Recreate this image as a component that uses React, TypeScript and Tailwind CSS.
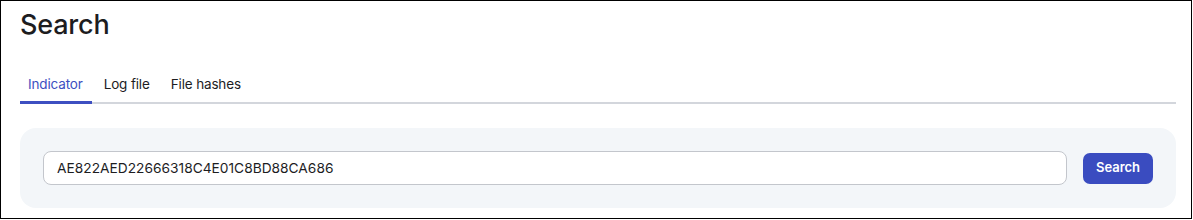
export default function App() {
  const tabs = ["Indicator", "Log file", "File hashes"];
  return (
    <div
      className="h-[219px] w-[1192px] border border-black bg-white pl-[19px] pr-[15px] text-[#1d1d1f]"
      style={{ fontFamily: "Inter, 'Noto Sans', sans-serif" }}
    >
      <h1 className="pt-[6px] text-[27px] font-medium leading-[36px] tracking-[-0.2px]">Search</h1>

      {/* Tabs */}
      <div className="mt-[32px] flex gap-1 border-b-2 border-[#d3d6dc]">
        {tabs.map((t, i) => (
          <button
            key={t}
            className={
              "-mb-[2px] border-b-[3px] pl-2 pr-[9px] pb-[8px] text-[13.5px] leading-[18px] tracking-[-0.15px] " +
              (i === 0 ? "border-[#3d4fc1] text-[#3d4fc1]" : "border-transparent text-[#1d1d1f]")
            }
          >
            {t}
          </button>
        ))}
      </div>

      {/* Search panel */}
      <div className="mt-[24px] flex items-center gap-4 rounded-2xl bg-[#f3f6f9] px-[23px] py-[23px]">
        <input
          readOnly
          value="AE822AED22666318C4E01C8BD88CA686"
          className="h-[34px] flex-1 rounded-lg border border-[#c3c6cc] bg-white px-[13px] text-[13.75px] text-[#1d1d1f] outline-none"
        />
        <button className="h-[31px] w-[70px] rounded-[7px] bg-[#3a4cc0] text-[13px] font-semibold text-white">
          Search
        </button>
      </div>
    </div>
  );
}
